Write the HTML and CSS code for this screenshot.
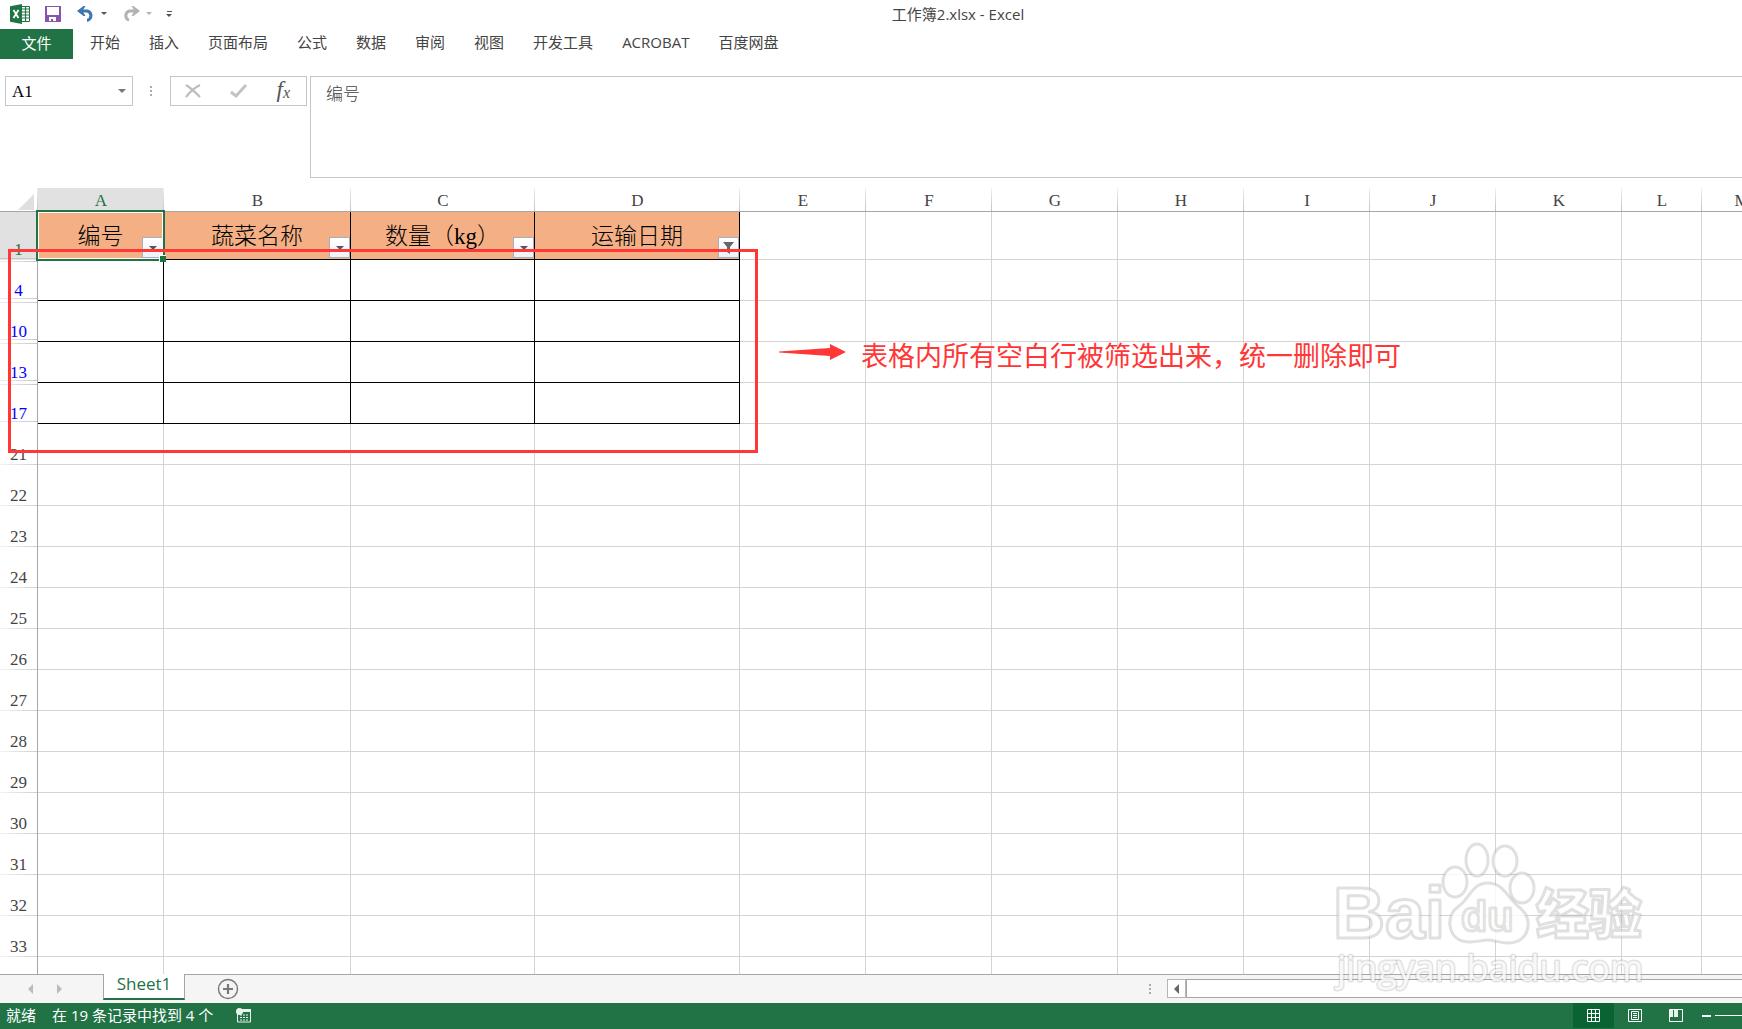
FILE: index.html
```html
<!DOCTYPE html>
<html lang="zh-CN">
<head>
<meta charset="utf-8">
<title>工作簿2.xlsx - Excel</title>
<link rel="stylesheet" href="styles.css">
</head>
<body>
<header class="titlebar">
  <div class="quick">
    <svg class="logo" width="20" height="20" viewBox="0 0 20 20"><path d="M11 2.500h8.500v15H11z" fill="#fff" stroke="#217346"/><path d="M12 5h7M12 8h7M12 11h7M12 14h7M15.500 3v14" stroke="#217346" stroke-width="1.200"/><path d="M0 2.200 12 0v20L0 17.800z" fill="#217346"/><path d="m3.500 6 5 8m0-8-5 8" stroke="#fff" stroke-width="1.800"/></svg>
    <button class="qbtn save" aria-label="保存"><svg width="16" height="16" viewBox="0 0 16 16"><path fill="#8855a8" fill-rule="evenodd" d="M0 0h16v16H0zM2 1v8h12V1zM4 11v4h2v-2h2v2h3v-4z"/></svg></button>
    <button class="qbtn undo" aria-label="撤消"><svg width="18" height="16" viewBox="0 0 18 16"><path d="M2 5h8.500a4.800 4.800 0 0 1 0 9.200H10" fill="none" stroke="#3f76b0" stroke-width="3"/><path d="M0 5 6.500 0h2L5.500 5l3 5h-2z" fill="#3f76b0"/></svg><i class="caret"></i></button>
    <button class="qbtn redo" aria-label="恢复"><svg width="18" height="16" viewBox="0 0 18 16"><path d="M16 5H7.500a4.800 4.800 0 0 0-.5 9.200" fill="none" stroke="#b3b3b3" stroke-width="3"/><path d="m18 5-6.500-5h-2l3 5-3 5h2z" fill="#b3b3b3"/></svg><i class="caret pale"></i></button>
    <button class="qbtn more" aria-label="自定义快速访问工具栏"><i class="bar"></i><i class="caret small"></i></button>
  </div>
  <h1 class="doc-title">工作簿2.xlsx - Excel</h1>
</header>
<nav class="ribbon">
  <button class="file">文件</button>
  <button>开始</button><button>插入</button><button>页面布局</button><button>公式</button><button>数据</button><button>审阅</button><button>视图</button><button>开发工具</button><button>ACROBAT</button><button>百度网盘</button>
</nav>
<section class="formula-bar">
  <div class="namebox"><input aria-label="名称框" value="A1"><button aria-label="名称列表"><i class="caret big"></i></button></div>
  <span class="dots"><i></i><i></i><i></i></span>
  <div class="fx">
    <button aria-label="取消"><svg width="16" height="14" viewBox="0 0 16 14"><path d="M1 1c5 3 10 8 14 12M15 1C9 4 4 9 1 13" fill="none" stroke="#bdbdbd" stroke-width="2.200"/></svg></button>
    <button aria-label="输入"><svg width="18" height="14" viewBox="0 0 18 14"><path d="m1 8 5 4L16 1" fill="none" stroke="#c3c3c3" stroke-width="3"/></svg></button>
    <button class="fn" aria-label="插入函数">f<sub>x</sub></button>
  </div>
  <textarea class="formula" aria-label="编辑栏">编号</textarea>
</section>
<main class="sheet">
<table class="grid">
<colgroup><col class="c-head"><col class="c-std"><col class="c-b"><col class="c-c"><col class="c-d"><col class="c-std"><col class="c-std"><col class="c-std"><col class="c-std"><col class="c-std"><col class="c-std"><col class="c-std"><col class="c-l"><col class="c-l"></colgroup>
<thead><tr><th class="corner"><svg width="16" height="16" viewBox="0 0 16 16"><path d="M16 0v16H0z" fill="#dfdfdf"/></svg></th><th class="on">A</th><th>B</th><th>C</th><th>D</th><th>E</th><th>F</th><th>G</th><th>H</th><th>I</th><th>J</th><th>K</th><th>L</th><th>M</th></tr></thead>
<tbody class="data">
<tr class="first"><th class="on">1</th><td>编号<button class="filter" aria-label="筛选编号"><i class="caret"></i></button><span class="selection"></span></td><td>蔬菜名称<button class="filter" aria-label="筛选蔬菜名称"><i class="caret"></i></button></td><td>数量（<span class="unit">kg</span>）<button class="filter" aria-label="筛选数量"><i class="caret"></i></button></td><td>运输日期<button class="filter" aria-label="筛选运输日期"><svg width="11" height="12" viewBox="0 0 11 12"><path d="M0 0h11L7 5v7L4 10V5z" fill="#666"/></svg></button></td><td></td><td></td><td></td><td></td><td></td><td></td><td></td><td></td><td></td></tr>
<tr><th>4</th><td></td><td></td><td></td><td></td><td></td><td></td><td></td><td></td><td></td><td></td><td></td><td></td><td></td></tr>
<tr><th>10</th><td></td><td></td><td></td><td></td><td></td><td></td><td></td><td></td><td></td><td></td><td></td><td></td><td></td></tr>
<tr><th>13</th><td></td><td></td><td></td><td></td><td></td><td></td><td></td><td></td><td></td><td></td><td></td><td></td><td></td></tr>
<tr><th>17</th><td></td><td></td><td></td><td></td><td></td><td></td><td></td><td></td><td></td><td></td><td></td><td></td><td></td></tr>
</tbody>
<tbody class="rest">
<tr><th>21</th><td></td><td></td><td></td><td></td><td></td><td></td><td></td><td></td><td></td><td></td><td></td><td></td><td></td></tr>
<tr><th>22</th><td></td><td></td><td></td><td></td><td></td><td></td><td></td><td></td><td></td><td></td><td></td><td></td><td></td></tr>
<tr><th>23</th><td></td><td></td><td></td><td></td><td></td><td></td><td></td><td></td><td></td><td></td><td></td><td></td><td></td></tr>
<tr><th>24</th><td></td><td></td><td></td><td></td><td></td><td></td><td></td><td></td><td></td><td></td><td></td><td></td><td></td></tr>
<tr><th>25</th><td></td><td></td><td></td><td></td><td></td><td></td><td></td><td></td><td></td><td></td><td></td><td></td><td></td></tr>
<tr><th>26</th><td></td><td></td><td></td><td></td><td></td><td></td><td></td><td></td><td></td><td></td><td></td><td></td><td></td></tr>
<tr><th>27</th><td></td><td></td><td></td><td></td><td></td><td></td><td></td><td></td><td></td><td></td><td></td><td></td><td></td></tr>
<tr><th>28</th><td></td><td></td><td></td><td></td><td></td><td></td><td></td><td></td><td></td><td></td><td></td><td></td><td></td></tr>
<tr><th>29</th><td></td><td></td><td></td><td></td><td></td><td></td><td></td><td></td><td></td><td></td><td></td><td></td><td></td></tr>
<tr><th>30</th><td></td><td></td><td></td><td></td><td></td><td></td><td></td><td></td><td></td><td></td><td></td><td></td><td></td></tr>
<tr><th>31</th><td></td><td></td><td></td><td></td><td></td><td></td><td></td><td></td><td></td><td></td><td></td><td></td><td></td></tr>
<tr><th>32</th><td></td><td></td><td></td><td></td><td></td><td></td><td></td><td></td><td></td><td></td><td></td><td></td><td></td></tr>
<tr><th>33</th><td></td><td></td><td></td><td></td><td></td><td></td><td></td><td></td><td></td><td></td><td></td><td></td><td></td></tr>
<tr><th></th><td></td><td></td><td></td><td></td><td></td><td></td><td></td><td></td><td></td><td></td><td></td><td></td><td></td></tr>
</tbody>
</table>
<div class="mark-box"></div>
<div class="mark-note"><svg width="68" height="18" viewBox="0 0 68 18"><path d="M0 8.500 51 5V1l16 8-16 8v-4L0 9.500z" fill="#ff3737"/></svg><span>表格内所有空白行被筛选出来，统一删除即可</span></div>
</main>
<footer class="tabs">
  <div class="tab-nav"><button aria-label="上一个"><i class="left"></i></button><button aria-label="下一个"><i class="right"></i></button></div>
  <button class="tab">Sheet1</button>
  <button class="add" aria-label="新工作表"><svg width="22" height="22" viewBox="0 0 22 22"><circle cx="11" cy="11" r="9.500" fill="none" stroke="#777" stroke-width="1.400"/><path d="M11 6v10M6 11h10" stroke="#777" stroke-width="2.200"/></svg></button>
  <span class="dots"><i></i><i></i><i></i></span>
  <div class="scroller"><button aria-label="向左滚动"><i class="left dark"></i></button><div class="track"></div></div>
</footer>
<footer class="status">
  <span>就绪</span><span>在 19 条记录中找到 4 个</span>
  <svg width="15" height="15" viewBox="0 0 15 15"><path d="M1.500 6v8h13V2H6" fill="none" stroke="#e8f3ec"/><path d="M6 1h9v3H6z" fill="#e8f3ec"/><path d="M4 7h9M4 9.500h9M4 12h9" stroke="#e8f3ec" stroke-dasharray="2 1"/><circle cx="3.500" cy="3.500" r="3.500" fill="#e8f3ec"/></svg>
  <div class="views">
    <button class="active" aria-label="普通"><svg width="13" height="13" viewBox="0 0 13 13"><path d="M.5.5h12v12H.5zM4.500 0v13M8.500 0v13M0 4.500h13M0 8.500h13" fill="none" stroke="#fff"/></svg></button>
    <button aria-label="页面布局视图"><svg width="14" height="13" viewBox="0 0 14 13"><path d="M.5.5h13v12H.5zM3.500 2.500h7v8h-7zM5 4.500h4M5 6.500h4M5 8.500h4" fill="none" stroke="#fff"/></svg></button>
    <button aria-label="分页预览"><svg width="14" height="13" viewBox="0 0 14 13"><path d="M.5.5h13v12H.5z" fill="none" stroke="#fff"/><path d="M1 1h3v7H1zM5 1h4v7H5z" fill="#e8f3ec"/></svg></button>
  </div>
  <div class="zoom"><i class="minus"></i><i class="rail"></i></div>
</footer>
<svg class="watermark" width="330" height="160" viewBox="0 0 330 160" aria-hidden="true">
  <g class="wm">
    <text class="wm-bai" x="8" y="103">Bai</text>
    <ellipse cx="130" cy="47" rx="12" ry="15"/><ellipse cx="152" cy="25" rx="11" ry="16"/><ellipse cx="180" cy="26" rx="12" ry="15"/><ellipse cx="197" cy="53" rx="12" ry="15"/>
    <path d="M163 48c-16 0-18 15-29 23-7 5-10 12-9 20 2 11 9 16 20 16 8 0 12-2 18-2s12 3 20 3c11 0 19-6 20-17 1-8-3-14-9-19-11-8-15-24-31-24z"/>
    <text class="wm-du" x="136" y="96">du</text>
    <text class="wm-cn" x="211" y="99">经验</text>
    <text class="wm-url" x="12" y="146">jingyan.baidu.com</text>
  </g>
</svg>
</body>
</html>
```
FILE: styles.css
```css
* { box-sizing: border-box; }
body {
  margin: 0;
  height: 100vh;
  display: flex;
  flex-direction: column;
  position: relative;
  overflow: hidden;
  background: #fff;
  color: #444;
  font: 15px/20px "Open Sans", "Noto Sans CJK SC", sans-serif;
}
button, input, textarea { font: inherit; color: inherit; border: 0; padding: 0; margin: 0; background: none; outline: 0; }
i { display: block; }
svg { display: block; flex: none; }

.caret { border: 3px solid transparent; border-top-color: #555; border-bottom: 0; }
.caret.pale { border-top-color: #b3b3b3; }
.caret.big { border-width: 4px; border-bottom: 0; border-top-color: #777; }
.dots { display: flex; flex-direction: column; gap: 2px; }
.dots i { width: 2px; height: 2px; background: #aaa; }

.titlebar { display: flex; flex: none; height: 29px; padding-bottom: 2px; align-items: center; }
.quick { display: flex; width: 174px; padding-left: 10px; align-items: center; flex: none; }
.qbtn { display: flex; align-items: center; gap: 6px; }
.save { margin-left: 15px; }
.undo { margin-left: 16px; }
.redo { margin-left: 15px; }
.more { margin-left: 14px; flex-direction: column; gap: 2px; }
.bar { width: 5px; height: 1px; background: #555; }
.doc-title { flex: 1; margin: 0; text-align: center; font-size: 15px; font-weight: 400; }

.ribbon { display: flex; flex: none; height: 30px; gap: 29px; }
.ribbon button { white-space: nowrap; padding-bottom: 4px; }
.ribbon .file { width: 73px; margin-right: -12px; padding-bottom: 2px; background: #217346; color: #fff; }

.formula-bar { display: flex; flex: none; height: 129px; padding: 17px 0 10px 5px; align-items: flex-start; }
.namebox, .fx { display: flex; height: 30px; border: 1px solid #c6c6c6; align-items: center; }
.namebox { width: 128px; padding: 0 6px; color: #000; font-family: "Liberation Serif", serif; font-size: 17px; }
.namebox input { flex: 1; min-width: 0; padding-top: 2px; }
.formula-bar .dots { margin: 10px 18px 0 17px; }
.fx { width: 137px; justify-content: space-between; padding: 0 16px 0 14px; }
.fn { font: italic 23px/24px "Liberation Serif", serif; color: #555; }
.fn sub { font-size: 16px; vertical-align: -1px; }
.formula { flex: 1; height: 102px; margin-left: 3px; padding: 4px 15px; border: 1px solid #c6c6c6; border-right: 0; resize: none; font: 300 17px/24px "Noto Sans CJK SC", sans-serif; }

.sheet { flex: 1; min-height: 0; position: relative; overflow: hidden; }
.grid { width: 1782px; table-layout: fixed; border-collapse: separate; border-spacing: 0; font-family: "Liberation Serif", "Noto Sans CJK SC", serif; }
.c-head { width: 38px; }
.c-std { width: 126px; }
.c-b { width: 187px; }
.c-c { width: 184px; }
.c-d { width: 205px; }
.c-l { width: 80px; }
.grid th, .grid td { padding: 0; }
.grid th { font-weight: 400; font-size: 17px; line-height: 20px; }
thead th { height: 24px; border-bottom: 1px solid #a6a6a6; background: linear-gradient(#f0f0f0, #c4c4c4) right / 1px 100% no-repeat; }
.grid thead th { padding-top: 3px; }
.grid thead .corner { padding-top: 0; }
thead .on { background-color: #e1e1e1; color: #217346; }
.corner svg { margin: 4px 0 0 18px; }
.rest th, .data th { height: 41px; border-right: 1px solid #a6a6a6; vertical-align: bottom; }
.rest th { background: linear-gradient(90deg, #f4f4f4, #cfcfcf) bottom / 100% 1px no-repeat; }
.data th {
  color: #00f;
  background:
    linear-gradient(90deg, #f0f0f0, #c8c8c8) 0 1px / 100% 1px no-repeat,
    linear-gradient(90deg, #f0f0f0, #c8c8c8) 0 38px / 100% 1px no-repeat;
}
.data .first th { height: 48px; color: #217346; background: linear-gradient(#c8c8c8, #c8c8c8) 0 46px / 100% 1px no-repeat, #e1e1e1; }
.grid td { border: 0 solid #d4d4d4; border-width: 0 1px 1px 0; }
.data td:nth-child(-n+5) { border-color: #000; }
.grid .first td { position: relative; padding-top: 2px; text-align: center; font-size: 23px; line-height: 30px; color: #000; font-weight: 300; }
.unit { font-weight: 400; }
.first td:nth-child(-n+5) { background: #f4b084; }
.filter { position: absolute; right: 0; bottom: 1px; width: 21px; height: 21px; display: flex; align-items: center; justify-content: center; border: 1px solid #a6b0bd; background: linear-gradient(#fff, #eef1f5); }
.filter .caret { border-width: 4px; border-bottom: 0; }
.selection { position: absolute; inset: -2px; z-index: 1; border: 2px solid #217346; box-shadow: inset 0 0 0 1px #fff; }
.selection::after { content: ""; position: absolute; right: -3px; bottom: -3px; width: 6px; height: 6px; background: #217346; border: solid #fff; border-width: 1px 0 0 1px; }

.mark-box { position: absolute; z-index: 2; left: 8px; top: 61px; width: 750px; height: 204px; border: 3px solid #ff3737; }
.mark-note { position: absolute; left: 779px; top: 147px; display: flex; gap: 14px; color: #ff3737; font: 27px/40px "Noto Sans CJK SC", sans-serif; white-space: nowrap; }
.mark-note svg { margin-top: 8px; }

.tabs { display: flex; flex: none; height: 29px; background: #f5f5f5; box-shadow: inset 0 1px #a6a6a6; align-items: center; }
.tab-nav { display: flex; width: 103px; padding-left: 28px; gap: 24px; }
.left, .right { border: 5px solid transparent; }
.left { border-left: 0; border-right-color: #bbb; }
.right { border-right: 0; border-left-color: #bbb; }
.left.dark { border-right-color: #666; }
.tab { align-self: flex-start; width: 82px; height: 26px; padding-bottom: 4px; border: 1px solid #a6a6a6; border-width: 0 1px 2px; border-bottom-color: #217346; background: #fff; color: #217346; font-size: 17px; }
.add { margin: 0 auto 0 32px; }
.tabs .dots { margin-right: 16px; }
.scroller { display: flex; flex: 0 0 33%; height: 19px; background: #fff; }
.scroller button { width: 19px; display: flex; align-items: center; justify-content: center; border: 1px solid #b5b5b5; }
.track { flex: 1; border: 1px solid #a6a6a6; border-right: 0; }

.status { display: flex; flex: none; height: 26px; padding: 0 0 1px 6px; gap: 16px; align-items: center; background: #217346; color: #fff; }
.status > span { padding-bottom: 1px; }
.status > svg { margin-left: 7px; }
.views { display: flex; margin-left: auto; align-self: stretch; }
.views button { width: 41px; display: flex; align-items: center; justify-content: center; }
.views .active { background: #0a6332; }
.zoom { display: flex; align-items: center; gap: 4px; margin-left: -10px; }
.minus { width: 9px; height: 2px; background: #fff; }
.rail { width: 27px; height: 1px; background: #fff; }

.watermark { position: absolute; right: 87px; bottom: 34px; z-index: 3; }
.wm { fill: #fff; fill-opacity: .8; stroke: #999; stroke-opacity: .3; stroke-width: 3; stroke-linejoin: round; }
.wm-bai { font: 700 72px "Liberation Sans", sans-serif; }
.wm-du { font: 700 43px "Liberation Sans", sans-serif; }
.wm-cn { font: 900 53px "Noto Sans CJK SC", sans-serif; }
.wm-url { font: 36px "Open Sans", sans-serif; paint-order: stroke; }
```
